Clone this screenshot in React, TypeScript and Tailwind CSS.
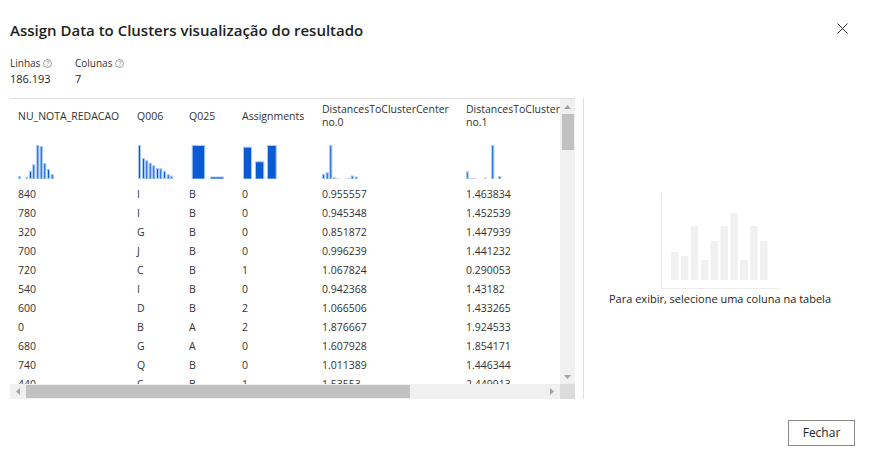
import React from 'react';

type Bar = [number, number, number]; // x, width, height

const histograms: Bar[][] = [
    [[0, 2.7, 3], [7.7, 2.3, 2.3], [11, 3, 8], [14.3, 3, 14.7], [18.3, 3, 34], [21.7, 3, 33], [25.3, 3, 16], [29, 3, 10], [32.7, 3, 5]],
    [[1, 3, 34], [5, 3, 21], [8.3, 3, 18.7], [11.7, 3, 16.3], [15.3, 3, 13.7], [19, 3, 11], [22.3, 3, 10.7], [26, 3, 8.3], [29.7, 3, 4.7], [33, 3, 3.5]],
    [[2.7, 13.5, 34], [21, 14, 2.5]],
    [[1, 9, 32.3], [13, 9.3, 17.7], [25, 9.7, 34]],
    [[0, 3, 5], [3.7, 3, 6.7], [7.3, 3, 34], [11, 2.7, 2], [14.7, 3, 1], [25, 3, 1], [28.7, 3, 3.5], [32.7, 3, 2.5]],
    [[0, 2.7, 7.7], [3.7, 6, 1], [18, 2.7, 1.5], [25.3, 3, 34], [32.3, 3, 3]],
];

const columns = [
    { w: 'w-[119px]', title: ['NU_NOTA_REDACAO'] },
    { w: 'w-[52px]', title: ['Q006'] },
    { w: 'w-[53px]', title: ['Q025'] },
    { w: 'w-[80px]', title: ['Assignments'] },
    { w: 'w-[144px]', title: ['DistancesToClusterCenter', 'no.0'] },
    { w: 'w-[150px]', title: ['DistancesToClusterCenter', 'no.1'] },
];

const rows = [
    ['840', 'I', 'B', '0', '0.955557', '1.463834'],
    ['780', 'I', 'B', '0', '0.945348', '1.452539'],
    ['320', 'G', 'B', '0', '0.851872', '1.447939'],
    ['700', 'J', 'B', '0', '0.996239', '1.441232'],
    ['720', 'C', 'B', '1', '1.067824', '0.290053'],
    ['540', 'I', 'B', '0', '0.942368', '1.43182'],
    ['600', 'D', 'B', '2', '1.066506', '1.433265'],
    ['0', 'B', 'A', '2', '1.876667', '1.924533'],
    ['680', 'G', 'A', '0', '1.607928', '1.854171'],
    ['740', 'Q', 'B', '0', '1.011389', '1.446344'],
    ['440', 'C', 'B', '1', '1.53553', '2.449913'],
];

function Histogram({ bars }: { bars: Bar[] }) {
    return (
        <svg width="60" height="34" viewBox="0 0 60 34">
            {bars.map(([x, w, h], i) =>
                h < 2 ? (
                    <rect key={i} x={x} y={34 - h} width={w} height={h} fill="#b6d1f4" />
                ) : (
                    <rect key={i} x={x + 0.5} y={34 - h + 0.5} width={w - 1} height={h - 0.5} fill="#0a5ad4" stroke="#a6c7f1" strokeWidth="1" />
                )
            )}
        </svg>
    );
}

function HelpIcon() {
    return (
        <span className="ml-[3px] inline-flex h-[9px] w-[9px] items-center justify-center rounded-full border border-[#a19f9d] text-[7px] leading-none text-[#8a8886]">
            ?
        </span>
    );
}

function Arrow({ dir }: { dir: 'up' | 'down' | 'left' | 'right' }) {
    const pts = {
        up: '0,4 3.5,0 7,4',
        down: '0,0 3.5,4 7,0',
        left: '4,0 0,3.5 4,7',
        right: '0,0 4,3.5 0,7',
    }[dir];
    const size = dir === 'up' || dir === 'down' ? { w: 7, h: 4 } : { w: 4, h: 7 };
    return (
        <svg width={size.w} height={size.h}>
            <polygon points={pts} fill="#a3a3a3" />
        </svg>
    );
}

function PlaceholderChart() {
    const heights = [28, 24, 54, 20, 39, 54, 67, 20, 54, 39];
    return (
        <svg width="118" height="96" viewBox="0 0 118 96">
            <line x1="0.5" y1="0" x2="0.5" y2="95" stroke="#ececec" />
            <line x1="0" y1="95.5" x2="117" y2="95.5" stroke="#ececec" />
            {heights.map((h, i) => (
                <rect key={i} x={10 + i * 9.9} y={87 - h} width="7.4" height={h} fill="#f0f0f0" />
            ))}
        </svg>
    );
}

export default function App() {
    return (
        <div className="relative h-[463px] w-[873px] overflow-hidden bg-white font-['Open_Sans','Noto_Sans',sans-serif] text-[#323130]">
            {/* Title */}
            <div className="flex items-center justify-between pl-[10px] pr-[25px] pt-[18px]">
                <h1 className="text-[15px] font-semibold leading-[24px] text-[#201f1e]">
                    Assign Data to Clusters visualização do resultado
                </h1>
                <svg width="11" height="11" viewBox="0 0 11 11" className="-mt-[4px]">
                    <path d="M0.5 0.5 L10.5 10.5 M10.5 0.5 L0.5 10.5" stroke="#323130" strokeWidth="1" />
                </svg>
            </div>

            {/* Stats */}
            <div className="mt-[14px] flex gap-[22px] pl-[10px]">
                <div className="w-[43px]">
                    <div className="flex items-center text-[10px] leading-[14px]">Linhas<HelpIcon /></div>
                    <div className="mt-[2px] text-[11px] leading-[14px] text-[#201f1e]">186.193</div>
                </div>
                <div>
                    <div className="flex items-center text-[10px] leading-[14px]">Colunas<HelpIcon /></div>
                    <div className="mt-[2px] text-[11px] leading-[14px] text-[#201f1e]">7</div>
                </div>
            </div>

            {/* Main area */}
            <div className="mt-[12px] flex h-[301px]">
                <div className="ml-[10px] w-[574px] border-r border-[#e1dfdd] pr-[8px]">
                    <div className="flex h-full w-[565px] flex-col border-t border-[#e1dfdd]">
                        <div className="flex min-h-0 flex-1">
                            {/* Grid content */}
                            <div className="w-[550px] overflow-hidden">
                                <div className="w-[760px] pl-[8px] text-[10.5px]">
                                    <div className="flex h-[34px] items-center">
                                        {columns.map((c, i) => (
                                            <div key={i} className={`${c.w} shrink-0 overflow-hidden whitespace-nowrap leading-[13px]`}>
                                                {c.title.map((t) => (
                                                    <div key={t}>{t}</div>
                                                ))}
                                            </div>
                                        ))}
                                    </div>
                                    <div className="flex h-[52px] pt-[12px]">
                                        {columns.map((c, i) => (
                                            <div key={i} className={`${c.w} shrink-0`}>
                                                <Histogram bars={histograms[i]} />
                                            </div>
                                        ))}
                                    </div>
                                    {rows.map((r, ri) => (
                                        <div key={ri} className="flex h-[19px] items-center">
                                            {r.map((v, ci) => (
                                                <div key={ci} className={`${columns[ci].w} shrink-0 leading-[19px]`}>{v}</div>
                                            ))}
                                        </div>
                                    ))}
                                </div>
                            </div>
                            {/* Vertical scrollbar */}
                            <div className="flex w-[15px] flex-col items-center bg-[#f0f0f0]">
                                <div className="flex h-[15px] items-center justify-center"><Arrow dir="up" /></div>
                                <div className="h-[36px] w-[12px] bg-[#c1c1c1]" />
                                <div className="flex-1" />
                                <div className="flex h-[15px] items-center justify-center"><Arrow dir="down" /></div>
                            </div>
                        </div>
                        {/* Horizontal scrollbar */}
                        <div className="flex h-[15px]">
                            <div className="flex w-[550px] items-center bg-[#f0f0f0]">
                                <div className="flex w-[16px] justify-center"><Arrow dir="left" /></div>
                                <div className="h-[13px] w-[384px] bg-[#c1c1c1]" />
                                <div className="flex-1" />
                                <div className="flex w-[16px] justify-center"><Arrow dir="right" /></div>
                            </div>
                            <div className="w-[15px] bg-[#dcdcdc]" />
                        </div>
                    </div>
                </div>

                {/* Right panel */}
                <div className="mr-[17px] flex flex-1 flex-col items-center justify-center pt-[2px]">
                    <PlaceholderChart />
                    <div className="mt-[3px] text-[11px] leading-[14px] text-[#201f1e]">
                        Para exibir, selecione uma coluna na tabela
                    </div>
                </div>
            </div>

            {/* Footer */}
            <div className="flex justify-end pr-[18px] pt-[21px]">
                <button className="h-[26px] w-[67px] border border-[#8a8886] bg-white text-[12px] text-[#201f1e]">
                    Fechar
                </button>
            </div>
        </div>
    );
}
